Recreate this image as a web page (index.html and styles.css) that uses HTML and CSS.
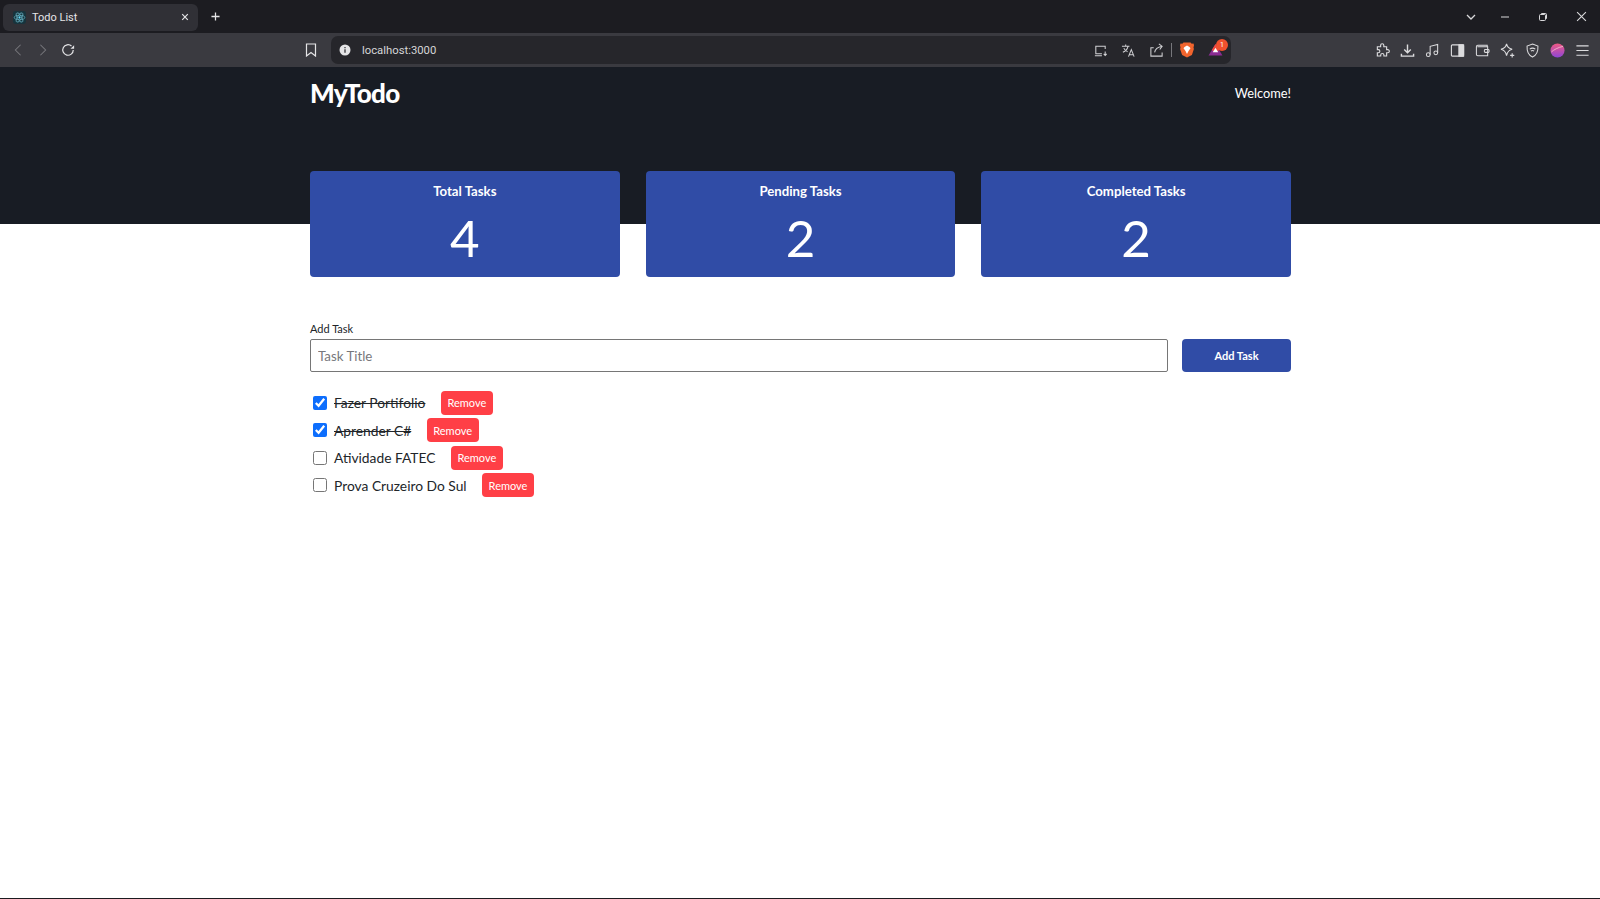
FILE: index.html
```html
<!DOCTYPE html>
<html>
	<head>
		<title>Todo List</title>
		<link rel="stylesheet" href="styles.css">
	</head>
	<body>
		<div class="tabstrip">
			<div class="tab">
				<svg class="favicon" viewBox="0 0 16 16" fill="none" stroke="#61a8b8" stroke-width="1"><rect width="16" height="16" rx="3" fill="#17343d" stroke="none"/><circle cx="8" cy="8" r="1.4" fill="#61dafb" stroke="none"/><ellipse cx="8" cy="8" rx="6.5" ry="2.6"/><ellipse cx="8" cy="8" rx="6.5" ry="2.6" transform="rotate(60 8 8)"/><ellipse cx="8" cy="8" rx="6.5" ry="2.6" transform="rotate(120 8 8)"/></svg>
				<span class="tab-title">Todo List</span>
				<svg class="tab-close" viewBox="0 0 10 10" stroke="#e4e4e6" stroke-width="1.5"><path d="M1.5 1.5l7 7M8.5 1.5l-7 7"/></svg>
			</div>
			<svg class="new-tab" viewBox="0 0 10 10" stroke="#e4e4e6" stroke-width="1.4"><path d="M5 0.5v9M0.5 5h9"/></svg>
			<div class="spacer"></div>
			<svg class="win-icon win-list" viewBox="0 0 10 10" fill="none" stroke="#d8d8da" stroke-width="1.3"><path d="M1 3l4 4 4-4"/></svg>
			<svg class="win-icon win-min" viewBox="0 0 10 10" stroke="#d8d8da"><path d="M1 5h8"/></svg>
			<svg class="win-icon win-max" viewBox="0 0 10 10" fill="none" stroke="#d8d8da"><rect x="1.5" y="2.5" width="6" height="6" rx="1"/><path d="M3.5 2.5v-1h4a1 1 0 0 1 1 1v4h-1"/></svg>
			<svg class="win-icon win-x" viewBox="0 0 10 10" stroke="#d8d8da"><path d="M1 1l8 8M9 1l-8 8"/></svg>
		</div>

		<div class="toolbar">
			<svg class="nav-icon" viewBox="0 0 16 16" fill="none" stroke="#77777c" stroke-width="1.2"><path d="M11 2L5 8l6 6"/></svg>
			<svg class="nav-icon forward" viewBox="0 0 16 16" fill="none" stroke="#77777c" stroke-width="1.2"><path d="M5 2l6 6-6 6"/></svg>
			<svg class="nav-icon reload" viewBox="0 0 16 16" fill="none" stroke="#e4e4e6" stroke-width="1.4"><path d="M14 8a6 6 0 1 1-2-4.500"/><path d="M15 2.500v4.200h-4.200z" fill="#e4e4e6" stroke="none"/></svg>
			<svg class="bookmark" viewBox="0 0 12 14" fill="none" stroke="#e4e4e6" stroke-width="1.2"><path d="M1.500 1h9v12L6 9.600 1.500 13z"/></svg>
			<div class="urlbar">
				<svg class="info" viewBox="0 0 12 12"><circle cx="6" cy="6" r="5.500" fill="#e4e4e6"/><path d="M6 5.200v3.600M6 3v1.200" stroke="#26262b" stroke-width="1.200"/></svg>
				<span class="url">localhost:3000</span>
				<div class="spacer"></div>
				<svg class="url-icon cast" viewBox="0 0 16 16" fill="none" stroke="#d0d0d3" stroke-width="1.100"><path d="M13 6.500V3.500H3v8h6.500M2 13.500h7.500"/><path d="M13 9v4m-1.600-1.500l1.600 1.700 1.600-1.700"/></svg>
				<svg class="url-icon translate" viewBox="0 0 16 16" fill="none" stroke="#d0d0d3" stroke-width="1.100"><path d="M1 3.500h8M5 1.500v2M7.500 3.500c-.7 3-2.500 5-5.500 6.300M3 5.500c.8 2 2.200 3 4 3.800M8 14.500l3-7.500 3 7.500M9 12.500h4.500"/></svg>
				<svg class="url-icon share" viewBox="0 0 16 16" fill="none" stroke="#d0d0d3" stroke-width="1.100"><path d="M6 10c.5-3.500 3-5.500 8-6.500M10.500 1l3.500 2.500-2.500 3.500"/><path d="M5 5H2v9h12v-4"/></svg>
				<div class="url-sep"></div>
				<svg class="brave" viewBox="0 0 14 16"><path d="M3.500.5h7l1.200 1.300 1.800-.3.500 1.800-.5 2.200.4 1.500-2 6-4.900 2.500-4.900-2.500-2-6 .4-1.500L0 3.300.5 1.500l1.800.3z" fill="#f1642d"/><path d="M7 3.500L4.500 5l-1 1.200L5.500 9 7 12l1.500-3 2-2.800-1-1.200z" fill="#fff"/></svg>
				<div class="rewards">
					<svg viewBox="0 0 16 14"><path d="M8 1l7.500 12.500H.5z" fill="#8a2b92"/><path d="M8 1l4 6.600L8 10 4 7.600z" fill="#ef4a3c"/><path d="M8 5l3 5H5z" fill="#fff"/></svg>
					<span class="badge">1</span>
				</div>
			</div>
			<svg class="tool-icon puzzle" viewBox="0 0 16 16" fill="none" stroke="#dcdcde" stroke-width="1.200"><path d="M6 2.500a1.700 1.700 0 0 1 3.400 0V4h3v3h1.200a1.700 1.700 0 0 1 0 3.400h-1.200v3.500H9.500v-1a1.700 1.700 0 0 0-3.400 0v1H2.500v-3.500h1a1.700 1.700 0 0 0 0-3.400h-1V4H6z"/></svg>
			<svg class="tool-icon" viewBox="0 0 16 16" fill="none" stroke="#dcdcde" stroke-width="1.500"><path d="M8 1.500v8.500M4.500 7L8 10.500 11.500 7M1.500 11.500v2.500h13v-2.500"/></svg>
			<svg class="tool-icon" viewBox="0 0 16 16" fill="none" stroke="#dcdcde" stroke-width="1.100"><path d="M5.500 12.500V3.500l8-2v9"/><circle cx="3.500" cy="12.500" r="2"/><circle cx="11.500" cy="10.500" r="2"/></svg>
			<svg class="tool-icon" viewBox="0 0 16 16" stroke="#dcdcde" stroke-width="1.200"><rect x="1.500" y="2" width="13" height="12" rx="1" fill="none"/><rect x="9.500" y="2" width="5" height="12" fill="#dcdcde"/></svg>
			<svg class="tool-icon" viewBox="0 0 16 16" fill="none" stroke="#dcdcde" stroke-width="1.100"><path d="M13 4V2.500H3a1.500 1.500 0 0 0-1.500 1.500v8A1.500 1.500 0 0 0 3 13.500h10.500V4H2.500"/><rect x="10" y="7" width="5" height="3" rx="1"/></svg>
			<svg class="tool-icon" viewBox="0 0 16 16" fill="none" stroke="#dcdcde" stroke-width="1.200"><path d="M7 1c.6 3.400 2.200 5 6 5.700C9.200 7.400 7.900 9.200 7 13.500 6.100 9.200 4.800 7.400 1 6.700 4.800 6 6.400 4.400 7 1z"/><path d="M13 11v4.500M10.800 13.200h4.400"/></svg>
			<svg class="tool-icon" viewBox="0 0 16 16" fill="none" stroke="#dcdcde" stroke-width="1.100"><path d="M8 1l5.800 2.200c.3 5-1 9.500-5.800 11.800C3.200 12.700 1.900 8.200 2.200 3.200z"/><path d="M5 6.500c2-1.400 4-1.400 6 0M6.300 8.500c1-.7 2.400-.7 3.400 0"/></svg>
			<svg class="tool-icon" viewBox="0 0 16 16"><defs><linearGradient id="profile" x1="0" y1="0" x2="0" y2="1"><stop offset="0" stop-color="#ef5a83"/><stop offset="1" stop-color="#8f45d6"/></linearGradient></defs><circle cx="8" cy="8" r="7.500" fill="url(#profile)"/><path d="M1.500 9.500C4.500 7 8 5 14 3.500" stroke="#f4b3c4" stroke-width="1" fill="none"/></svg>
			<svg class="tool-icon" viewBox="0 0 16 16" stroke="#dcdcde" stroke-width="1.200"><path d="M1.500 3h13M1.500 8h13M1.500 13h13"/></svg>
		</div>

		<div class="page">
			<div class="hero">
				<div class="wrap hero-row">
					<h1 class="logo">MyTodo</h1>
					<span class="welcome">Welcome!</span>
				</div>
			</div>

			<div class="wrap">
				<div class="cards">
					<div class="card">
						<h2>Total Tasks</h2>
						<p>4</p>
					</div>
					<div class="card">
						<h2>Pending Tasks</h2>
						<p>2</p>
					</div>
					<div class="card">
						<h2>Completed Tasks</h2>
						<p>2</p>
					</div>
				</div>

				<label class="add-label">Add Task</label>
				<div class="add-row">
					<input class="add-input" type="text" placeholder="Task Title">
					<button class="add-btn">Add Task</button>
				</div>

				<ul class="tasks">
					<li class="task done">
						<input type="checkbox" checked>
						<span>Fazer Portifolio</span>
						<button class="remove">Remove</button>
					</li>
					<li class="task done">
						<input type="checkbox" checked>
						<span>Aprender C#</span>
						<button class="remove">Remove</button>
					</li>
					<li class="task">
						<input type="checkbox">
						<span>Atividade FATEC</span>
						<button class="remove">Remove</button>
					</li>
					<li class="task">
						<input type="checkbox">
						<span>Prova Cruzeiro Do Sul</span>
						<button class="remove">Remove</button>
					</li>
				</ul>
			</div>
		</div>
	</body>
</html>
```

FILE: styles.css
```css
* {
	box-sizing: border-box;
}

html, body {
	height: 100%;
}

body {
	margin: 0;
	display: flex;
	flex-direction: column;
	overflow: hidden;
	font-family: "Lato", "Open Sans", sans-serif;
	background: #fff;
	border-bottom: 1px solid #1b1b1f;
}

svg {
	display: block;
	flex: none;
}

.spacer {
	flex: 1;
}

/* browser chrome */
.tabstrip {
	height: 33px;
	flex: none;
	display: flex;
	align-items: center;
	background: #1c1c21;
	padding-left: 3px;
	font-family: "Roboto", sans-serif;
}

.tab {
	width: 195px;
	height: 27px;
	margin-top: 1px;
	display: flex;
	align-items: center;
	padding: 0 9px 0 10px;
	background: #303036;
	border-radius: 6px;
	color: #e6e6e8;
	font-size: 11px;
}

.favicon {
	width: 13px;
	height: 13px;
	margin-right: 6px;
}

.tab-title {
	flex: 1;
}

.tab-close {
	width: 8px;
	height: 8px;
}

.new-tab {
	width: 9px;
	height: 9px;
	margin-left: 13px;
}

.win-icon {
	width: 10px;
	height: 10px;
}

.win-list {
	margin-right: 24px;
}

.win-min {
	margin-right: 28px;
}

.win-max {
	margin-right: 28px;
}

.win-x {
	width: 11px;
	height: 11px;
	margin-right: 13px;
}

.toolbar {
	height: 34px;
	flex: none;
	display: flex;
	align-items: center;
	background: #3a3a40;
	padding-left: 11px;
	font-family: "Roboto", sans-serif;
}

.nav-icon {
	width: 14px;
	height: 14px;
	margin-right: 11px;
}

.forward {
	margin-right: 11px;
}

.bookmark {
	width: 12px;
	height: 14px;
	margin-left: 219px;
	margin-right: 14px;
}

.urlbar {
	width: 900px;
	height: 28px;
	display: flex;
	align-items: center;
	background: #26262b;
	border-radius: 7px;
	padding: 0 0 0 8px;
	color: #d6d6d8;
	font-size: 11.300px;
}

.info {
	width: 12px;
	height: 12px;
	margin-right: 11px;
}

.url-icon {
	width: 15px;
	height: 15px;
	margin-right: 13px;
}

.url-sep {
	width: 1px;
	height: 14px;
	background: #77777c;
	margin: 0 8px 0 -6px;
}

.brave {
	width: 14px;
	height: 16px;
	margin-right: 14px;
}

.rewards {
	position: relative;
	width: 15px;
	height: 14px;
	margin-right: 8px;
}

.rewards svg {
	width: 15px;
	height: 13px;
}

.badge {
	position: absolute;
	top: -4px;
	left: 8px;
	width: 12px;
	height: 12px;
	border-radius: 50%;
	background: #f0512f;
	color: #fff;
	font-size: 7px;
	line-height: 12px;
	text-align: center;
}

.tool-icon {
	width: 15px;
	height: 15px;
	margin-right: 10px;
}

.puzzle {
	margin-left: 144px;
}

/* page */
.page {
	flex: 1;
	padding-left: 1px;
}

.wrap {
	width: 981px;
	margin: 0 auto;
}

.hero {
	height: 157px;
	margin-left: -1px;
	padding-left: 1px;
	background: #181c24;
}

.hero-row {
	display: flex;
	justify-content: space-between;
	align-items: flex-start;
	padding-top: 9px;
	color: #fff;
}

.logo {
	margin: 0;
	font-size: 26px;
	line-height: 34px;
	font-weight: 900;
	letter-spacing: -0.7px;
}

.welcome {
	font-size: 12.800px;
	line-height: 34px;
}

.cards {
	display: grid;
	grid-template-columns: repeat(3, 1fr);
	gap: 26px;
	margin-top: -53px;
}

.card {
	height: 106px;
	background: #304ca6;
	border-radius: 4px;
	color: #fff;
	text-align: center;
	padding-top: 12px;
}

.card h2 {
	margin: 0;
	font-size: 13.200px;
	line-height: 17px;
	font-weight: 700;
}

.card p {
	margin: 9px 0 0;
	font-size: 51px;
	line-height: 58px;
	font-weight: 400;
}

.add-label {
	display: block;
	margin-top: 45px;
	font-size: 11px;
	line-height: 14px;
	color: #212529;
}

.add-row {
	display: flex;
	gap: 14px;
	margin-top: 3px;
}

.add-input {
	flex: 1;
	height: 33px;
	padding: 0 7px;
	border: 1px solid #767676;
	border-radius: 2px;
	font-family: inherit;
	font-size: 13.300px;
}

.add-input::placeholder {
	color: #77777c;
}

.add-btn {
	width: 109px;
	height: 33px;
	border: 0;
	border-radius: 4px;
	background: #304ca6;
	color: #fff;
	font-family: inherit;
	font-size: 11px;
	font-weight: 700;
}

.tasks {
	list-style: none;
	margin: 17px 0 0;
	padding: 0;
}

.task {
	display: flex;
	align-items: center;
	height: 27.500px;
	padding-left: 3px;
	font-size: 13.800px;
	color: #212529;
}

.task input {
	width: 14px;
	height: 14px;
	margin: 0 7px 0 0;
	accent-color: #0d6efd;
}

.done span {
	text-decoration: line-through;
}

.remove {
	height: 24px;
	margin-left: 15.500px;
	padding: 0 6.500px;
	border: 0;
	border-radius: 4px;
	background: #ff3f46;
	color: #fff;
	font-family: inherit;
	font-size: 11px;
}
```
